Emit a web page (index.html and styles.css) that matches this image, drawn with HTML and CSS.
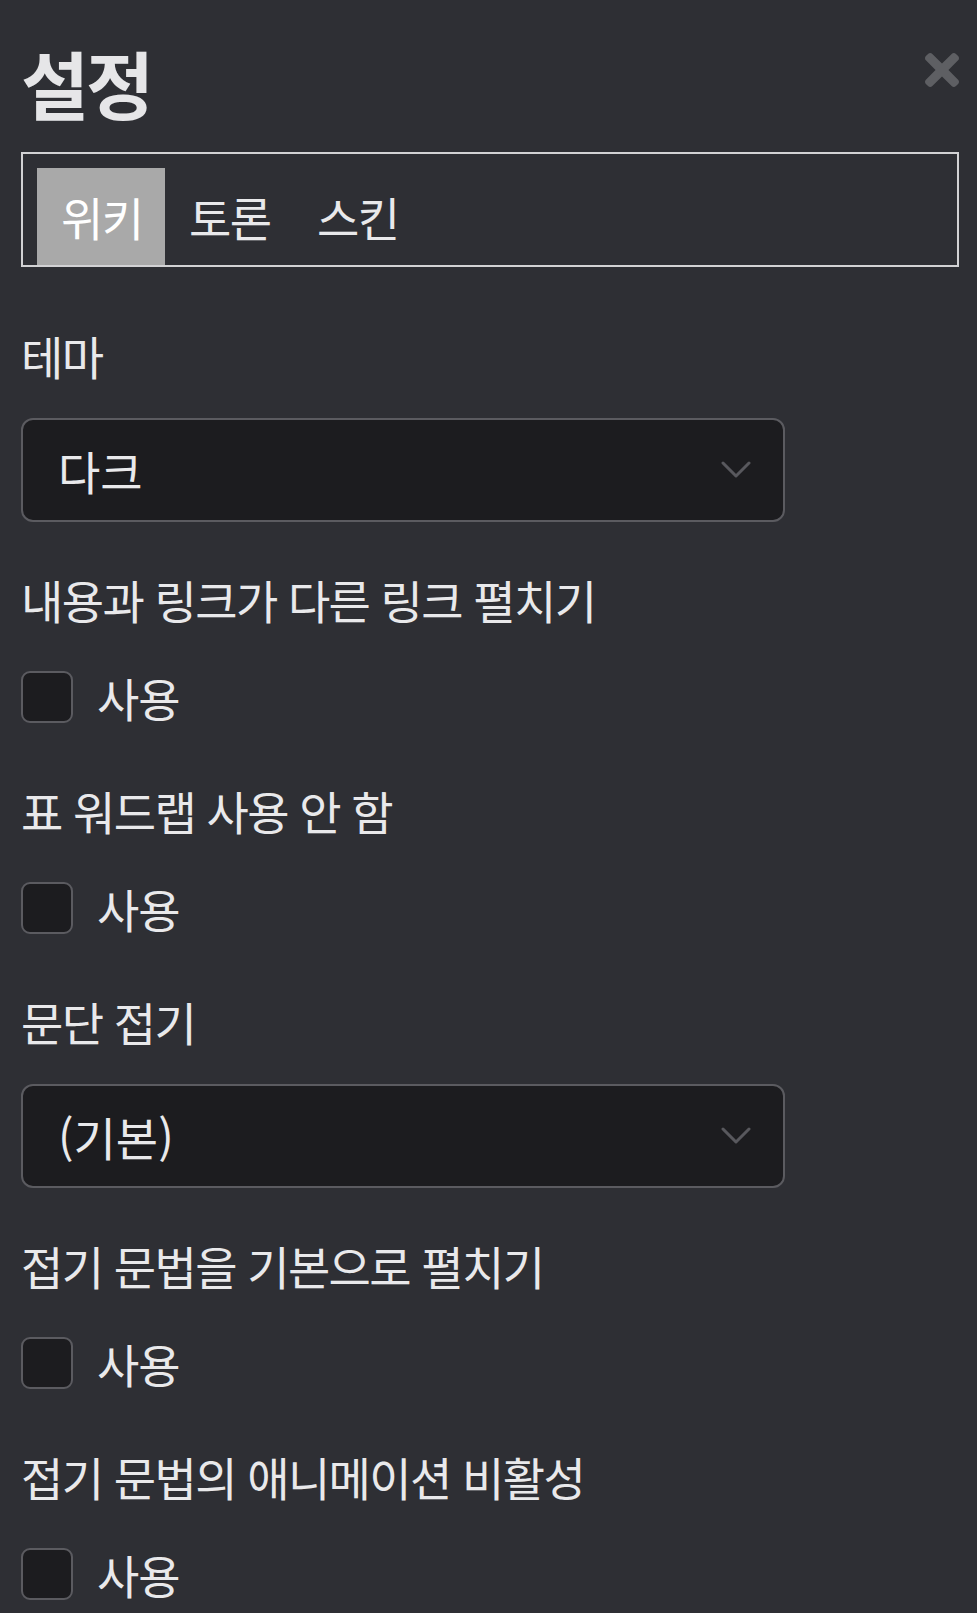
FILE: index.html
```html
<!DOCTYPE html>
<html lang="ko">
<head>
<meta charset="utf-8">
<title>설정</title>
<link rel="stylesheet" href="styles.css">
</head>
<body>
<div class="panel">
  <header class="head">
    <h1 class="title">설정</h1>
    <button class="close" type="button" aria-label="닫기">
      <svg viewBox="0 80 352 352" width="34" height="34"><path fill="currentColor" d="M242.72 256l100.07-100.07c12.28-12.28 12.28-32.19 0-44.48l-22.24-22.24c-12.28-12.28-32.19-12.28-44.48 0L176 189.28 75.930 89.21c-12.28-12.28-32.19-12.28-44.48 0L9.21 111.45c-12.28 12.28-12.28 32.19 0 44.48L109.28 256 9.21 356.07c-12.28 12.28-12.28 32.19 0 44.48l22.24 22.24c12.28 12.28 32.2 12.28 44.48 0L176 322.72l100.07 100.07c12.28 12.28 32.2 12.28 44.48 0l22.240-22.24c12.28-12.28 12.28-32.19 0-44.48L242.72 256z"/></svg>
    </button>
  </header>

  <nav class="tabs">
    <span class="tab tab-active">위키</span>
    <span class="tab">토론</span>
    <span class="tab">스킨</span>
  </nav>

  <div class="fields">
    <section class="field field-select">
      <div class="label">테마</div>
      <div class="select">
        <span class="select-value">다크</span>
        <svg class="chev" viewBox="0 0 30 18" width="30" height="18"><polyline points="2,2 15,15 28,2" fill="none" stroke="currentColor" stroke-width="3" stroke-linecap="round" stroke-linejoin="round"/></svg>
      </div>
    </section>

    <section class="field field-check">
      <div class="label">내용과 링크가 다른 링크 펼치기</div>
      <label class="check"><span class="box"></span><span class="check-text">사용</span></label>
    </section>

    <section class="field field-check">
      <div class="label">표 워드랩 사용 안 함</div>
      <label class="check"><span class="box"></span><span class="check-text">사용</span></label>
    </section>

    <section class="field field-select">
      <div class="label">문단 접기</div>
      <div class="select">
        <span class="select-value">(기본)</span>
        <svg class="chev" viewBox="0 0 30 18" width="30" height="18"><polyline points="2,2 15,15 28,2" fill="none" stroke="currentColor" stroke-width="3" stroke-linecap="round" stroke-linejoin="round"/></svg>
      </div>
    </section>

    <section class="field field-check">
      <div class="label">접기 문법을 기본으로 펼치기</div>
      <label class="check"><span class="box"></span><span class="check-text">사용</span></label>
    </section>

    <section class="field field-check">
      <div class="label">접기 문법의 애니메이션 비활성</div>
      <label class="check"><span class="box"></span><span class="check-text">사용</span></label>
    </section>
  </div>
</div>
</body>
</html>
```

FILE: styles.css
```css
html, body {
  margin: 0;
  padding: 0;
  background: #2e2f34;
}

body {
  font-family: "Noto Sans CJK KR", "Noto Sans", sans-serif;
  color: #e9e9eb;
}

.panel {
  padding: 40px 18px 0 21px;
}

.head {
  display: flex;
  justify-content: space-between;
  align-items: flex-start;
}

.title {
  margin: 0;
  font-size: 74px;
  line-height: 84px;
  font-weight: 700;
  letter-spacing: -3px;
  color: #e6e6e8;
}

.close {
  margin: 13px 0 0 0;
  padding: 0;
  border: 0;
  background: none;
  color: #5e5f63;
  width: 34px;
  height: 34px;
  display: block;
}

.close svg {
  display: block;
}

.tabs {
  margin-top: 28px;
  border: 2px solid #d2d2d4;
  padding: 14px 14px 0 14px;
  display: flex;
}

.tab {
  display: block;
  box-sizing: border-box;
  width: 128px;
  height: 97px;
  line-height: 97px;
  padding: 0 0 0 24px;
  font-size: 46px;
  letter-spacing: -1.5px;
  color: #e9e9eb;
}

.tab-active {
  background: #a9a9a9;
  color: #ffffff;
}

.fields {
  margin-top: 64px;
  display: flex;
  flex-direction: column;
}

.label {
  font-size: 46px;
  line-height: 48px;
  letter-spacing: -1.6px;
  white-space: nowrap;
}

.field-select {
  margin-bottom: 53px;
}

.field-select .label {
  margin-bottom: 39px;
}

.field-check {
  margin-bottom: 63px;
}

.field-check .label {
  margin-bottom: 48px;
}

.select {
  box-sizing: border-box;
  width: 764px;
  height: 104px;
  border: 2px solid #5b5b60;
  border-radius: 12px;
  background: #1c1c1f;
  padding: 0 32px 0 35px;
  display: flex;
  align-items: center;
  justify-content: space-between;
}

.select-value {
  font-size: 46px;
  line-height: 48px;
  letter-spacing: 0;
}

.chev {
  display: block;
  color: #58585d;
}

.check {
  display: flex;
  align-items: center;
  gap: 24px;
}

.box {
  box-sizing: border-box;
  width: 52px;
  height: 52px;
  border: 2px solid #5b5b60;
  border-radius: 9px;
  background: #1c1c1f;
}

.check-text {
  font-size: 46px;
  line-height: 48px;
  letter-spacing: -1px;
}
```
